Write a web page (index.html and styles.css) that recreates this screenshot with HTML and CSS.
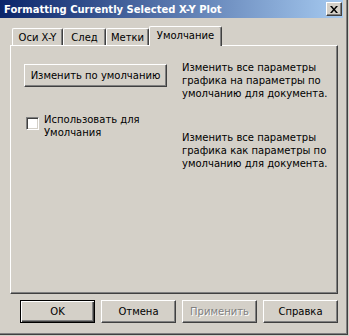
FILE: index.html
```html
<!DOCTYPE html>
<html lang="ru">
<head>
    <meta charset="UTF-8">
    <title>Formatting Currently Selected X-Y Plot</title>
    <link rel="stylesheet" href="styles.css">
</head>
<body>
    <div class="window">
        <div class="titlebar">
            <span class="title">Formatting Currently Selected X-Y Plot</span>
            <button class="close" aria-label="Закрыть">
                <svg width="8" height="7" viewBox="0 0 8 7">
                    <path d="M0 0h2l2 2.5L6 0h2L5 3.5 8 7H6L4 4.5 2 7H0l3-3.5z" fill="#000"/>
                </svg>
            </button>
        </div>

        <!-- вкладки -->
        <div class="tabs">
            <div class="tab tab-axes">Оси X-Y</div>
            <div class="tab tab-trace">След</div>
            <div class="tab tab-marks">Метки</div>
            <div class="tab tab-default active">Умолчание</div>
        </div>

        <div class="panel">
            <div class="row">
                <button class="btn btn-wide">Изменить по умолчанию</button>
                <p class="note">Изменить все параметры<br>графика на параметры по<br>умолчанию для документа.</p>
            </div>
            <div class="row row-check">
                <label class="check">
                    <span class="box"></span>
                    <span class="check-text">Использовать для<br>Умолчания</span>
                </label>
                <p class="note note-second">Изменить все параметры<br>графика как параметры по<br>умолчанию для документа.</p>
            </div>
        </div>

        <div class="actions">
            <button class="btn btn-default">OK</button>
            <button class="btn">Отмена</button>
            <button class="btn" disabled>Применить</button>
            <button class="btn">Справка</button>
        </div>
    </div>
</body>
</html>
```

FILE: styles.css
```css
body {
    margin: 0;
    padding: 0;
    width: 349px;
    height: 336px;
    background: #d4d0c8;
    font-family: "DejaVu Sans", sans-serif;
    font-size: 10px;
    color: #000;
}

.window {
    width: 347px;
    height: 334px;
    background: #d4d0c8;
    border-right: 1px solid #404040;
    border-bottom: 1px solid #404040;
    box-shadow: inset -1px -1px #808080;
    display: flex;
    flex-direction: column;
}

/* Заголовок окна */
.titlebar {
    width: 343px;
    height: 18px;
    box-sizing: border-box;
    padding: 0 1px 0 4px;
    display: flex;
    align-items: center;
    justify-content: space-between;
    background: linear-gradient(to right, #0a246a, #a6caf0);
}

.title {
    color: #fff;
    font-weight: bold;
    font-size: 10px;
    white-space: nowrap;
}

.close {
    width: 16px;
    height: 14px;
    padding: 0;
    display: flex;
    align-items: center;
    justify-content: center;
    background: #d4d0c8;
    border: 1px solid;
    border-color: #fff #404040 #404040 #fff;
    box-shadow: inset -1px -1px #808080;
}

/* Вкладки */
.tabs {
    display: flex;
    align-items: flex-end;
    height: 19px;
    margin-top: 8px;
    padding-left: 12px;
    position: relative;
    z-index: 1;
}

.tab {
    height: 17px;
    box-sizing: border-box;
    border-top: 1px solid #fff;
    border-left: 1px solid #fff;
    border-right: 1px solid #404040;
    box-shadow: inset -1px 0 #808080;
    border-radius: 2px 2px 0 0;
    display: flex;
    align-items: center;
    justify-content: center;
    padding-top: 1px;
    white-space: nowrap;
}

.tab-axes { width: 51px; }
.tab-trace { width: 43px; }
.tab-marks { width: 43px; }
.tab-default { width: 73px; }

.tab.active {
    height: 20px;
    margin-bottom: -1px;
    background: #d4d0c8;
    padding-bottom: 3px;
}

/* Кнопки */
.btn {
    height: 23px;
    width: 75px;
    box-sizing: border-box;
    padding: 0;
    font-family: inherit;
    font-size: 10px;
    color: #000;
    background: #d4d0c8;
    border: 1px solid;
    border-color: #fff #404040 #404040 #fff;
    box-shadow: inset -1px -1px #808080;
}

.btn-default {
    border-color: #000;
    box-shadow: inset 1px 1px #fff, inset -1px -1px #404040, inset -2px -2px #808080;
}

.btn:disabled {
    color: #808080;
    text-shadow: 1px 1px #fff;
}

.actions {
    display: flex;
    gap: 6px;
    margin-top: 6px;
    padding-left: 20px;
}

/* Основная панель */
.panel {
    width: 328px;
    height: 249px;
    box-sizing: border-box;
    margin-left: 10px;
    border-top: 1px solid #fff;
    border-left: 1px solid #fff;
    border-right: 1px solid #404040;
    border-bottom: 1px solid #404040;
    box-shadow: inset -1px -1px #808080;
    padding: 15px 0 0 13px;
}

.row {
    display: flex;
    align-items: flex-start;
}

.row-check {
    margin-top: 13px;
}

.note {
    margin: 0;
    line-height: 13px;
    white-space: nowrap;
}

.btn-wide {
    width: 143px;
    flex-shrink: 0;
    white-space: nowrap;
    margin-top: 3px;
    margin-right: 15px;
}

.note-second {
    margin-top: 18px;
}

.check {
    width: 156px;
    flex-shrink: 0;
    margin-left: 2px;
    display: flex;
    align-items: flex-start;
    line-height: 13px;
}

.box {
    width: 13px;
    height: 13px;
    box-sizing: border-box;
    margin-top: 4px;
    margin-right: 5px;
    flex-shrink: 0;
    background: #fff;
    border: 1px solid;
    border-color: #808080 #fff #fff #808080;
    box-shadow: inset 1px 1px #404040, inset -1px -1px #d4d0c8;
}
```
